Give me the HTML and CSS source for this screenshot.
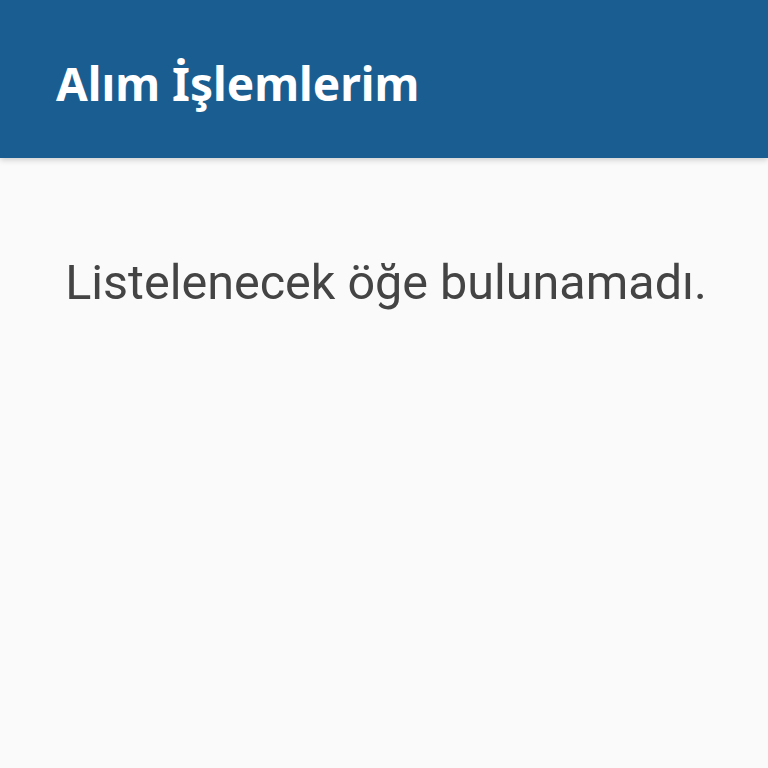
FILE: index.html
```html
<!DOCTYPE html>
<html lang="tr">
<head>
<meta charset="utf-8">
<link rel="stylesheet" href="styles.css">
</head>
<body>
<header class="appbar">
  <h1 class="title">Alım İşlemlerim</h1>
</header>
<main class="content">
  <p class="empty">Listelenecek öğe bulunamadı.</p>
</main>
</body>
</html>
```
FILE: styles.css
```css
html, body {
  margin: 0;
  padding: 0;
  height: 100%;
}
body {
  background: #fafafa;
  font-family: "Noto Sans", "Open Sans", sans-serif;
}
.appbar {
  background: #1a5e91;
  height: 158px;
  display: flex;
  align-items: center;
  padding-left: 56px;
  box-shadow: 0 2px 6px rgba(0,0,0,0.18);
  position: relative;
}
.title {
  margin: 0;
  color: #ffffff;
  font-family: "Noto Sans", sans-serif;
  font-weight: 700;
  font-size: 46px;
  line-height: 1;
  margin-top: 8px;
}
.content {
  display: flex;
  justify-content: center;
  padding-top: 101px;
}
.empty {
  margin: 0 0 0 4px;
  color: #444444;
  font-family: Roboto, sans-serif;
  font-size: 48.5px;
  line-height: 1;
}
```
